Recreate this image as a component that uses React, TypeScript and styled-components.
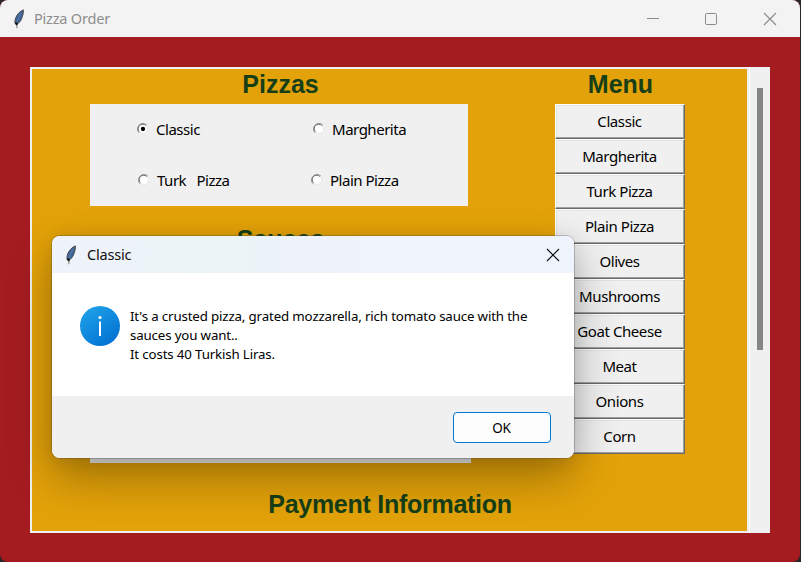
import React from "react";
import styled, { createGlobalStyle } from "styled-components";

const ui = `"Noto Sans", "Open Sans", sans-serif`;

const GlobalStyle = createGlobalStyle`
  * { box-sizing: border-box; }
  body { margin: 0; background: #2b2527; overflow: hidden; }
`;

const Window = styled.div`
  position: relative;
  display: flex;
  flex-direction: column;
  width: 800px;
  height: 562px;
  border-radius: 8px;
  overflow: hidden;
  background: #a51c20;
  font-family: ${ui};
`;

const TitleBar = styled.header`
  display: flex;
  align-items: center;
  flex: none;
  height: 37px;
  padding: 0 23px 0 13px;
  background: #f3f3f3;
`;

const TitleText = styled.span<{ $color: string; $spacing: number; $gap?: number }>`
  margin-left: ${(p) => p.$gap ?? 9}px;
  padding-bottom: 2px;
  font-size: 14.5px;
  line-height: 20px;
  letter-spacing: ${(p) => p.$spacing}px;
  color: ${(p) => p.$color};
  white-space: nowrap;
`;

const WindowControls = styled.div`
  display: flex;
  gap: 45px;
  margin-left: auto;
`;

const Body = styled.main`
  display: flex;
  width: 740px;
  height: 466px;
  margin: 30px 0 0 30px;
  background: #f0f0f0;
`;

const Canvas = styled.div`
  width: 719px;
  padding: 2px;
`;

const Surface = styled.div`
  display: flex;
  flex-direction: column;
  width: 715px;
  height: 462px;
  background: #e3a209;
`;

const Columns = styled.div`
  display: flex;
  height: 420px;
`;

const OptionsColumn = styled.section`
  display: flex;
  flex-direction: column;
  width: 496px;
  padding-left: 58px;
`;

const MenuColumn = styled.section`
  display: flex;
  flex-direction: column;
  width: 130px;
  margin-left: 27px;
`;

const Heading = styled.h2<{ $spacing?: number }>`
  margin: 0;
  height: 35px;
  padding: 1px 0 0 1px;
  font: bold 25px/29px "Liberation Sans", Arial, sans-serif;
  letter-spacing: ${(p) => p.$spacing ?? 0}px;
  text-align: center;
  color: #163f17;
`;

const OptionsHeading = styled(Heading)`
  width: 380px;
`;

const PizzaPanel = styled.div`
  display: grid;
  grid-template-columns: 189px 189px;
  grid-template-rows: 51px 51px;
  width: 378px;
  margin-bottom: 18px;
  background: #f0f0f0;
`;

const SaucePanel = styled.div`
  width: 381px;
  height: 204px;
  background: #f0f0f0;
`;

const Option = styled.label<{ $inset: number }>`
  display: flex;
  align-items: center;
  gap: 7px;
  padding: 0 0 2px ${(p) => p.$inset}px;
  font-size: 15px;
  line-height: 20px;
  letter-spacing: -0.48px;
  white-space: pre;
  color: #000;
`;

const MenuButton = styled.button`
  height: 35px;
  padding: 0 1px 1px 0;
  border: 1px solid;
  border-color: #fff #696969 #696969 #fff;
  box-shadow: inset -1px -1px #a0a0a0, inset 1px 1px #e3e3e3;
  background: #f0f0f0;
  font: 15px/20px ${ui};
  letter-spacing: -0.42px;
  color: #000;
`;

const ScrollTrack = styled.div`
  display: flex;
  width: 21px;
  height: 466px;
  padding: 21px 0 0 7px;
  border-left: 1px solid #fff;
`;

const ScrollThumb = styled.div`
  width: 6px;
  height: 262px;
  background: #858585;
`;

const Dialog = styled.div`
  position: absolute;
  left: 52px;
  top: 236px;
  display: flex;
  flex-direction: column;
  width: 522px;
  height: 222px;
  border-radius: 8px;
  background: #fff;
  box-shadow: 0 0 0 1px rgba(70, 70, 70, 0.3), 0 20px 46px rgba(0, 0, 0, 0.3),
    0 2px 20px rgba(0, 0, 0, 0.1);
`;

const DialogTitle = styled.header`
  display: flex;
  align-items: center;
  height: 37px;
  padding: 0 14px 0 13px;
  border-radius: 8px 8px 0 0;
  background: linear-gradient(90deg, #eff3fb 0%, #ebf4f7 28%, #edf3f9 48%, #eff3fb 60%, #eff3fb 100%);
`;

const CloseSlot = styled.div`
  display: flex;
  margin-left: auto;
`;

const DialogBody = styled.div`
  display: flex;
  gap: 10px;
  height: 123px;
  padding: 33px 0 0 28px;
`;

const Message = styled.p`
  margin: 1px 0 0;
  font-size: 13.3px;
  line-height: 19px;
  letter-spacing: -0.15px;
  white-space: pre;
  color: #000;
`;

const DialogFooter = styled.footer`
  display: flex;
  justify-content: flex-end;
  height: 62px;
  padding: 16px 23px 0 0;
  border-radius: 0 0 8px 8px;
  background: #f0f0f0;
`;

const OkButton = styled.button`
  width: 98px;
  height: 31px;
  padding: 0 1px 0 0;
  border: 1px solid #0078d4;
  border-radius: 4px;
  background: #fdfdfd;
  font: 13.5px/20px ${ui};
  letter-spacing: -0.2px;
  color: #000;
`;

const Feather = () => (
  <svg width="12" height="20" viewBox="0 0 12 20">
    <path d="M10.400.9C7.200 2.200 4.300 5 3 8.200 2 10.700 1.600 13 2.300 15l1.600.3C6.200 13.800 7.800 11.800 8.700 9.400 9.900 6.300 10.500 3.600 10.400.9Z" fill="#3b649a" stroke="#4a4a4c" strokeWidth="1" />
    <path d="M8.800 3.500C6.200 6.500 4.800 10 4 14" fill="none" stroke="#6d87aa" strokeWidth=".7" />
    <path d="M1.900 13 5.100 14 4.200 16.500H3.200Z" fill="#111" />
    <path d="M3.900 16v3.200" stroke="#858585" strokeWidth="1.100" />
  </svg>
);

const Cross = ({ color }: { color: string }) => (
  <svg width="14" height="14" viewBox="0 0 14 14" fill="none" stroke={color} strokeWidth="1.150">
    <path d="M1 1l12 12M13 1 1 13" />
  </svg>
);

const Radio = ({ checked }: { checked?: boolean }) => (
  <svg width="12" height="12" viewBox="0 0 12 12" fill="none">
    <circle cx="6" cy="6" r="5" fill="#fff" />
    <path d="M2.100 9.900A5.400 5.400 0 0 1 9.900 2.100" stroke="#9a9a9a" />
    <path d="M2.400 8.700A4.400 4.400 0 0 1 8.900 2.600" stroke="#686868" />
    <path d="M9.300 2.700A4.500 4.500 0 0 1 2.700 9.300" stroke="#e5e5e5" />
    {checked && <circle cx="6" cy="6" r="2.150" fill="#000" />}
  </svg>
);

const InfoIcon = () => (
  <svg width="40" height="40" viewBox="0 0 40 40">
    <defs>
      <linearGradient id="info" x1=".15" y1="0" x2=".85" y2="1">
        <stop offset="0" stopColor="#1fa2e8" />
        <stop offset="1" stopColor="#006fd1" />
      </linearGradient>
    </defs>
    <circle cx="20" cy="20" r="20" fill="url(#info)" />
    <circle cx="20" cy="11.500" r="1.600" fill="#fff" />
    <rect x="19" y="15.500" width="2" height="14.500" fill="#fff" />
  </svg>
);

const pizzas = [
  { name: "Classic", inset: 47, checked: true },
  { name: "Margherita", inset: 34 },
  { name: "Turk   Pizza", inset: 48 },
  { name: "Plain Pizza", inset: 32 },
];

const menu = [
  "Classic",
  "Margherita",
  "Turk Pizza",
  "Plain Pizza",
  "Olives",
  "Mushrooms",
  "Goat Cheese",
  "Meat",
  "Onions",
  "Corn",
];

export default function App() {
  return (
    <>
      <GlobalStyle />
      <Window>
        <TitleBar>
          <Feather />
          <TitleText $color="#8e8e8e" $spacing={-0.2}>Pizza Order</TitleText>
          <WindowControls>
            <svg width="14" height="14" viewBox="0 0 14 14">
              <path d="M2 6.500h12" stroke="#8b8b8b" />
            </svg>
            <svg width="14" height="14" viewBox="0 0 14 14" fill="none">
              <rect x="1.500" y="1.500" width="11" height="11" rx="1.200" stroke="#8b8b8b" />
            </svg>
            <Cross color="#8b8b8b" />
          </WindowControls>
        </TitleBar>
        <Body>
          <Canvas>
            <Surface>
              <Columns>
                <OptionsColumn>
                  <OptionsHeading>Pizzas</OptionsHeading>
                  <PizzaPanel>
                    {pizzas.map((p) => (
                      <Option key={p.name} $inset={p.inset}>
                        <Radio checked={p.checked} />
                        {p.name}
                      </Option>
                    ))}
                  </PizzaPanel>
                  <OptionsHeading>Sauces</OptionsHeading>
                  <SaucePanel />
                </OptionsColumn>
                <MenuColumn>
                  <Heading>Menu</Heading>
                  {menu.map((name) => (
                    <MenuButton key={name}>{name}</MenuButton>
                  ))}
                </MenuColumn>
              </Columns>
              <Heading $spacing={-0.27}>Payment Information</Heading>
            </Surface>
          </Canvas>
          <ScrollTrack>
            <ScrollThumb />
          </ScrollTrack>
        </Body>
        <Dialog>
          <DialogTitle>
            <Feather />
            <TitleText $color="#111" $spacing={-0.2} $gap={10}>Classic</TitleText>
            <CloseSlot>
              <Cross color="#111" />
            </CloseSlot>
          </DialogTitle>
          <DialogBody>
            <InfoIcon />
            <Message>
              {"It's a crusted pizza, grated mozzarella, rich tomato sauce with the\nsauces you want..\nIt costs 40 Turkish Liras."}
            </Message>
          </DialogBody>
          <DialogFooter>
            <OkButton>OK</OkButton>
          </DialogFooter>
        </Dialog>
      </Window>
    </>
  );
}
